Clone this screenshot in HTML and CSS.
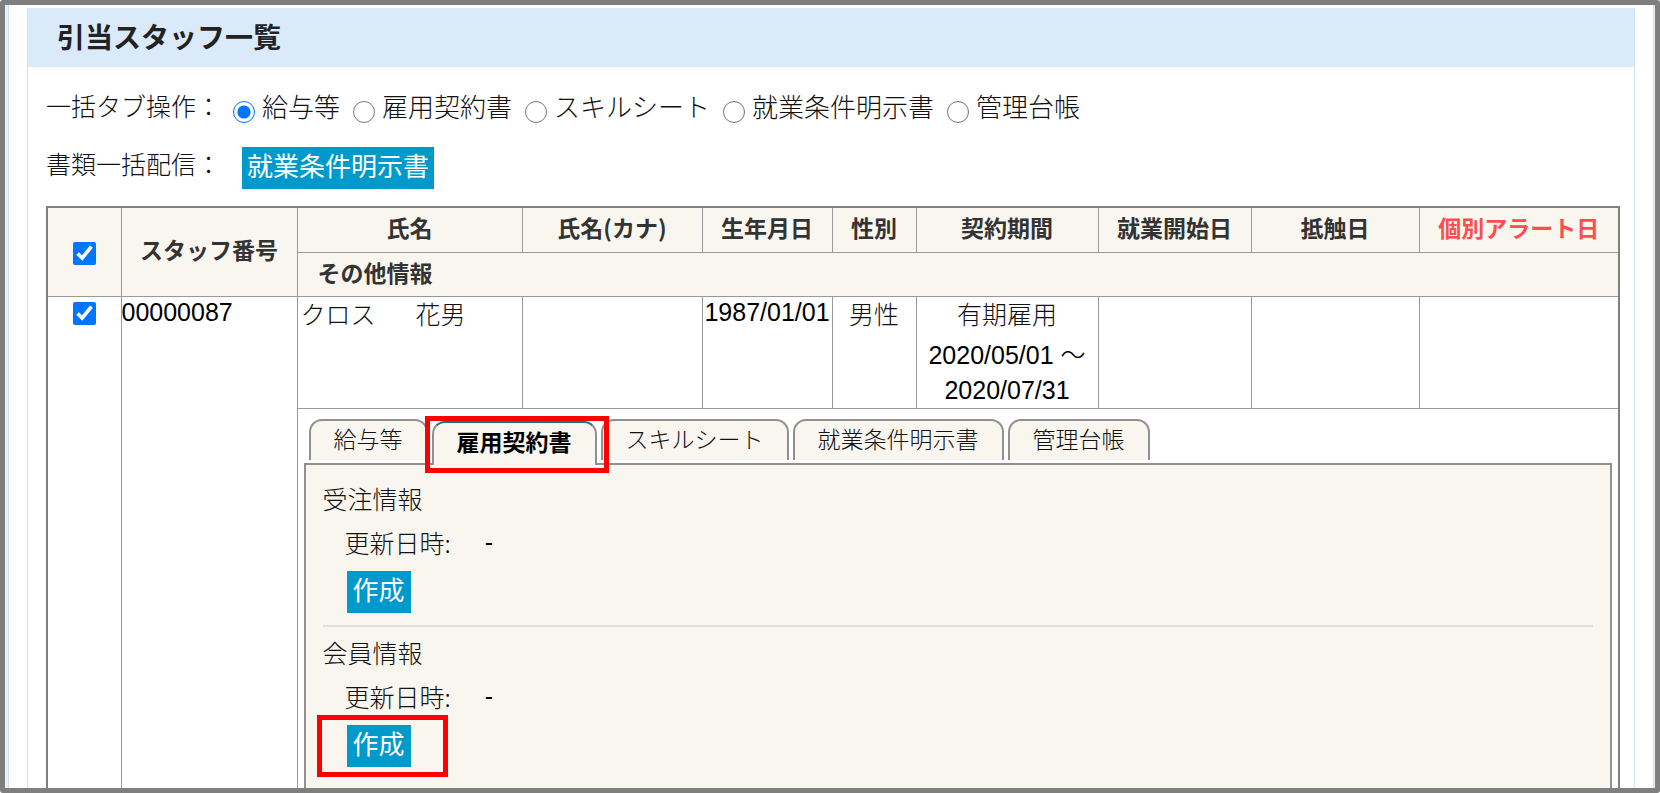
FILE: index.html
```html
<!DOCTYPE html>
<html lang="ja">
<head>
<meta charset="utf-8">
<title>引当スタッフ一覧</title>
<link rel="stylesheet" href="styles.css">
</head>
<body>
<div class="frame">
  <div class="page">
    <main class="card">
      <h1 class="card-title">引当スタッフ一覧</h1>
      <div class="controls">
        <div class="control-row" role="radiogroup" aria-labelledby="tab-ops">
          <span class="control-label" id="tab-ops">一括タブ操作：</span>
          <label class="radio"><input type="radio" name="tab" checked>給与等</label>
          <label class="radio"><input type="radio" name="tab">雇用契約書</label>
          <label class="radio"><input type="radio" name="tab">スキルシート</label>
          <label class="radio"><input type="radio" name="tab">就業条件明示書</label>
          <label class="radio"><input type="radio" name="tab">管理台帳</label>
        </div>
        <div class="control-row">
          <span class="control-label wide">書類一括配信：</span>
          <button class="button" type="button">就業条件明示書</button>
        </div>
      </div>
      <table class="staff">
        <colgroup>
          <col class="c-check"><col class="c-number"><col class="c-name"><col class="c-kana"><col class="c-birth">
          <col class="c-sex"><col class="c-term"><col class="c-start"><col class="c-limit"><col>
        </colgroup>
        <thead>
          <tr>
            <th rowspan="2"><input type="checkbox" aria-label="すべて選択" checked></th>
            <th rowspan="2">スタッフ番号</th>
            <th>氏名</th>
            <th>氏名(カナ)</th>
            <th>生年月日</th>
            <th>性別</th>
            <th>契約期間</th>
            <th>就業開始日</th>
            <th>抵触日</th>
            <th class="alert">個別アラート日</th>
          </tr>
          <tr>
            <th class="other" colspan="8">その他情報</th>
          </tr>
        </thead>
        <tbody>
          <tr class="person">
            <td class="check" rowspan="2"><input type="checkbox" aria-label="00000087を選択" checked></td>
            <td rowspan="2">00000087</td>
            <td class="name"><span>クロス</span><span>花男</span></td>
            <td></td>
            <td class="center">1987/01/01</td>
            <td class="center jp">男性</td>
            <td class="center"><div class="jp">有期雇用</div><div class="dates">2020/05/01 ～<br>2020/07/31</div></td>
            <td></td>
            <td></td>
            <td></td>
          </tr>
          <tr>
            <td class="detail" colspan="8">
              <div class="tabs" role="tablist">
                <button class="tab" type="button" role="tab">給与等</button>
                <button class="tab active" type="button" role="tab" aria-selected="true">雇用契約書<span class="mark"></span></button>
                <button class="tab" type="button" role="tab">スキルシート</button>
                <button class="tab" type="button" role="tab">就業条件明示書</button>
                <button class="tab" type="button" role="tab">管理台帳</button>
              </div>
              <div class="panel" role="tabpanel">
                <section class="block">
                  <h2 class="block-title">受注情報</h2>
                  <p class="updated"><span>更新日時:</span><span class="value">-</span></p>
                  <div class="action"><button class="button" type="button">作成</button></div>
                </section>
                <section class="block">
                  <h2 class="block-title">会員情報</h2>
                  <p class="updated"><span>更新日時:</span><span class="value">-</span></p>
                  <div class="action"><button class="button" type="button">作成</button><span class="mark"></span></div>
                </section>
              </div>
            </td>
          </tr>
        </tbody>
      </table>
    </main>
  </div>
</div>
</body>
</html>
```
FILE: styles.css
```css
* {
  box-sizing: border-box;
}

body {
  margin: 0;
  background: #fff;
  color: #111;
  font-family: "Liberation Sans", "Noto Sans CJK JP", sans-serif;
  font-size: 25px;
  font-weight: 300;
}

.frame {
  height: 100vh;
  overflow: hidden;
  border: 5px solid #7f7f7f;
  border-radius: 3px;
  background: #f0f0f0;
  padding: 0 1px 0 3px;
}

.page {
  border: solid #c8e0f7;
  border-width: 0 1px;
  background: #fff;
  padding: 3px 18px 0;
}

.card {
  border: solid #cfe4f8;
  border-width: 0 1px;
  padding-bottom: 40px;
}

.card-title {
  margin: 0;
  padding: 0 0 2px 29px;
  background: #daeaf9;
  color: #222;
  font-family: "Noto Sans CJK JP", sans-serif;
  font-size: 28px;
  font-weight: 700;
  line-height: 57px;
}

.controls {
  display: flex;
  flex-direction: column;
  gap: 19px;
  padding: 17px 18px 17px;
  font-family: "Noto Sans CJK JP", sans-serif;
  font-size: 26px;
}

.control-row {
  display: flex;
  align-items: center;
  gap: 13px;
  height: 43px;
}

.control-label {
  width: 174px;
  padding-bottom: 2px;
  font-size: 25px;
  white-space: nowrap;
}

.control-label.wide {
  width: 183px;
  padding-bottom: 10px;
}

.radio {
  display: flex;
  align-items: center;
  gap: 7px;
}

.radio input {
  width: 22px;
  height: 22px;
  margin: 12px 0 0;
}

.button {
  height: 42px;
  padding: 0 5px 5px;
  border: 0;
  background: #0099cc;
  color: #fff;
  font-family: "Noto Sans CJK JP", sans-serif;
  font-size: 26px;
  font-weight: 400;
  line-height: 36px;
}

.staff {
  width: calc(100% - 32px);
  margin-left: 18px;
  border: 2px solid #808080;
  border-collapse: collapse;
  table-layout: fixed;
}

.c-check { width: 74px; }
.c-number { width: 176px; }
.c-name { width: 225px; }
.c-kana { width: 180px; }
.c-birth { width: 130px; }
.c-sex { width: 84px; }
.c-term { width: 182px; }
.c-start { width: 153px; }
.c-limit { width: 168px; }

.staff th,
.staff td {
  border: 1px solid #999;
  padding: 0;
}

.staff th {
  height: 45px;
  padding-bottom: 5px;
  background: #f9f6ef;
  color: #333;
  font-family: "Noto Sans CJK JP", sans-serif;
  font-size: 23px;
  font-weight: 700;
  line-height: 36px;
}

.staff .alert {
  color: #ff4d4d;
}

.staff .other {
  height: 44px;
  padding-left: 20px;
  text-align: left;
}

.staff input {
  width: 23px;
  height: 23px;
  margin: 0;
  vertical-align: middle;
}

.staff td {
  color: #000;
  vertical-align: top;
  line-height: 30px;
}

.person {
  height: 110px;
}

.staff .check {
  text-align: center;
}

.staff .center {
  text-align: center;
}

.staff .jp {
  color: #111;
  line-height: 36px;
}

.dates {
  margin-top: 4px;
  padding-top: 1px;
  line-height: 35px;
}

.staff .name {
  padding-left: 3px;
  color: #111;
  line-height: 36px;
}

.name span + span {
  margin-left: 40px;
}

.staff .detail {
  padding: 10px 6px 0;
}

.tabs {
  display: flex;
  gap: 4px;
  padding-left: 5px;
}

.tab {
  position: relative;
  height: 41px;
  margin-bottom: 3px;
  padding: 0 23px 5px;
  border: 2px solid #909090;
  border-bottom: 0;
  border-radius: 13px 13px 0 0;
  background: #f9f6ef;
  color: #111;
  font-family: "Noto Sans CJK JP", sans-serif;
  font-size: 23px;
  font-weight: 300;
  line-height: 34px;
}

.tab.active {
  z-index: 1;
  height: 44px;
  margin: 2px 0 -2px;
  border-top-color: #0c7c7c;
  color: #000;
  font-weight: 700;
}

.mark {
  position: absolute;
  border: 5px solid #f00;
}

.tab .mark {
  inset: -7px -14px -8px -9px;
}

.panel {
  min-height: 380px;
  padding: 13px 17px;
  border: 2px solid #909090;
  background: #f9f6ef;
  color: #111;
  font-family: "Noto Sans CJK JP", sans-serif;
}

.block {
  display: flex;
  flex-direction: column;
  margin-bottom: 5px;
  padding-bottom: 12px;
  border-bottom: 2px solid #e0deda;
}

.block:last-child {
  border-bottom: 0;
}

.block-title {
  margin: 0;
  font-size: 25px;
  font-weight: 300;
  line-height: 40px;
}

.updated {
  display: flex;
  gap: 34px;
  margin: 0;
  padding: 5px 0 10px 22px;
  line-height: 38px;
}

.value {
  color: #000;
  font-family: "Liberation Sans", sans-serif;
  font-weight: 400;
}

.action {
  position: relative;
  align-self: flex-start;
  display: flex;
  margin-left: 24px;
}

.action .button {
  padding: 0 6px 5px;
}

.action .mark {
  inset: -10px -37px -10px -30px;
}
```
